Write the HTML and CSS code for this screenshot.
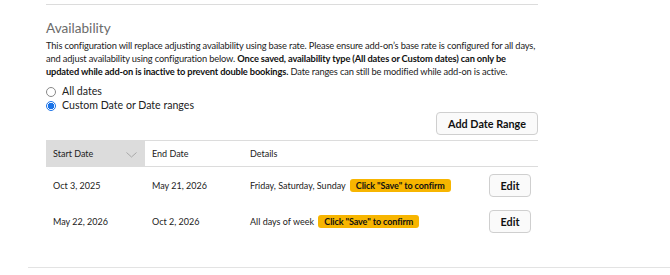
FILE: index.html
```html
<!DOCTYPE html>
<html>
<head>
<meta charset="utf-8">
<link rel="stylesheet" href="styles.css">
</head>
<body>
<div class="section">
  <h2 class="title">Availability</h2>
  <p class="desc"><span>This configuration will replace adjusting availability using base rate. Please ensure add-on’s base rate is configured for all days,</span> <span>and adjust availability using configuration below.</span> <b>Once saved, availability type (All dates or Custom dates) can only be</b> <b>updated while add-on is inactive to prevent double bookings.</b> <span>Date ranges can still be modified while add-on is active.</span></p>
  <div class="radios">
    <label class="radio"><span class="dot"></span>All dates</label>
    <label class="radio"><span class="dot on"></span>Custom Date or Date ranges</label>
  </div>
  <div class="actions"><button class="btn">Add Date Range</button></div>
  <table class="grid">
    <thead>
      <tr>
        <th class="sorted">Start Date<svg class="chev" width="11" height="6" viewBox="0 0 11 6"><path d="M0.5 0.5 L5.5 5 L10.5 0.5" fill="none" stroke="#a8a8a8" stroke-width="1"/></svg></th>
        <th>End Date</th>
        <th>Details</th>
        <th></th>
      </tr>
    </thead>
    <tbody>
      <tr>
        <td>Oct 3, 2025</td>
        <td>May 21, 2026</td>
        <td>Friday, Saturday, Sunday <span class="badge">Click "Save" to confirm</span></td>
        <td class="act"><button class="btn edit">Edit</button></td>
      </tr>
      <tr>
        <td>May 22, 2026</td>
        <td>Oct 2, 2026</td>
        <td>All days of week <span class="badge">Click "Save" to confirm</span></td>
        <td class="act"><button class="btn edit">Edit</button></td>
      </tr>
    </tbody>
  </table>
</div>
<div class="next"></div>
</body>
</html>
```
FILE: styles.css
```css
html, body { margin: 0; padding: 0; background: #fff; }
body { font-family: Lato, "Liberation Sans", sans-serif; color: #333; }
.section { margin: 4px 0 0 46px; width: 492px; border-top: 1px solid #dcdcdc; height: 262px; }
.title { margin: 15px 0 2px; font-size: 13.6px; font-weight: 400; color: #6b6b6b; line-height: 17px; }
.desc { margin: 0; font-size: 9.3px; line-height: 13px; color: #222; letter-spacing: -0.15px; }
.desc b { font-weight: 700; color: #111; }
.radios { margin-top: 8px; display: flex; flex-direction: column; gap: 3px; }
.radio { display: flex; align-items: center; font-size: 10.6px; line-height: 11px; color: #222; }
.dot { width: 8px; height: 8px; border: 1px solid #888; border-radius: 50%; margin: 0 6px 0 0; box-sizing: content-box; display: inline-block; }
.dot.on { border-color: #1a73e8; background: radial-gradient(circle, #1a73e8 0 3px, #fff 3.5px); }
.actions { display: flex; justify-content: flex-end; margin-top: 1px; }
.btn { font-family: inherit; font-weight: 700; font-size: 10.8px; color: #111; background: #fafafa; border: 1px solid #cfcfcf; border-radius: 4px; height: 23px; padding: 0 11px; }
.grid { margin-top: 5px; width: 100%; border-collapse: collapse; font-size: 9px; }
.grid th { text-align: left; font-weight: 400; height: 25px; padding: 0 7px; border-top: 1px solid #dcdcdc; border-bottom: 1px solid #dcdcdc; color: #222; }
.grid th.sorted { background: #dcdcdc; position: relative; }
.chev { position: absolute; right: 8px; top: 11px; }
.grid th:nth-child(1) { width: 85px; }
.grid th:nth-child(2) { width: 84px; }
.grid td { padding: 0 7px; height: 36px; color: #222; }
.badge { display: inline-block; background: #f7b500; color: #111; font-weight: 700; border-radius: 3px; padding: 1px 6px; font-size: 9px; line-height: 11px; margin-left: 2px; letter-spacing: -0.1px; }
.act { text-align: right; padding-right: 7px; }
.btn.edit { width: 42px; padding: 0; height: 23px; font-size: 10.8px; }
.next { margin-left: 28px; border-top: 1px solid #e3e3e3; height: 2px; }
```
